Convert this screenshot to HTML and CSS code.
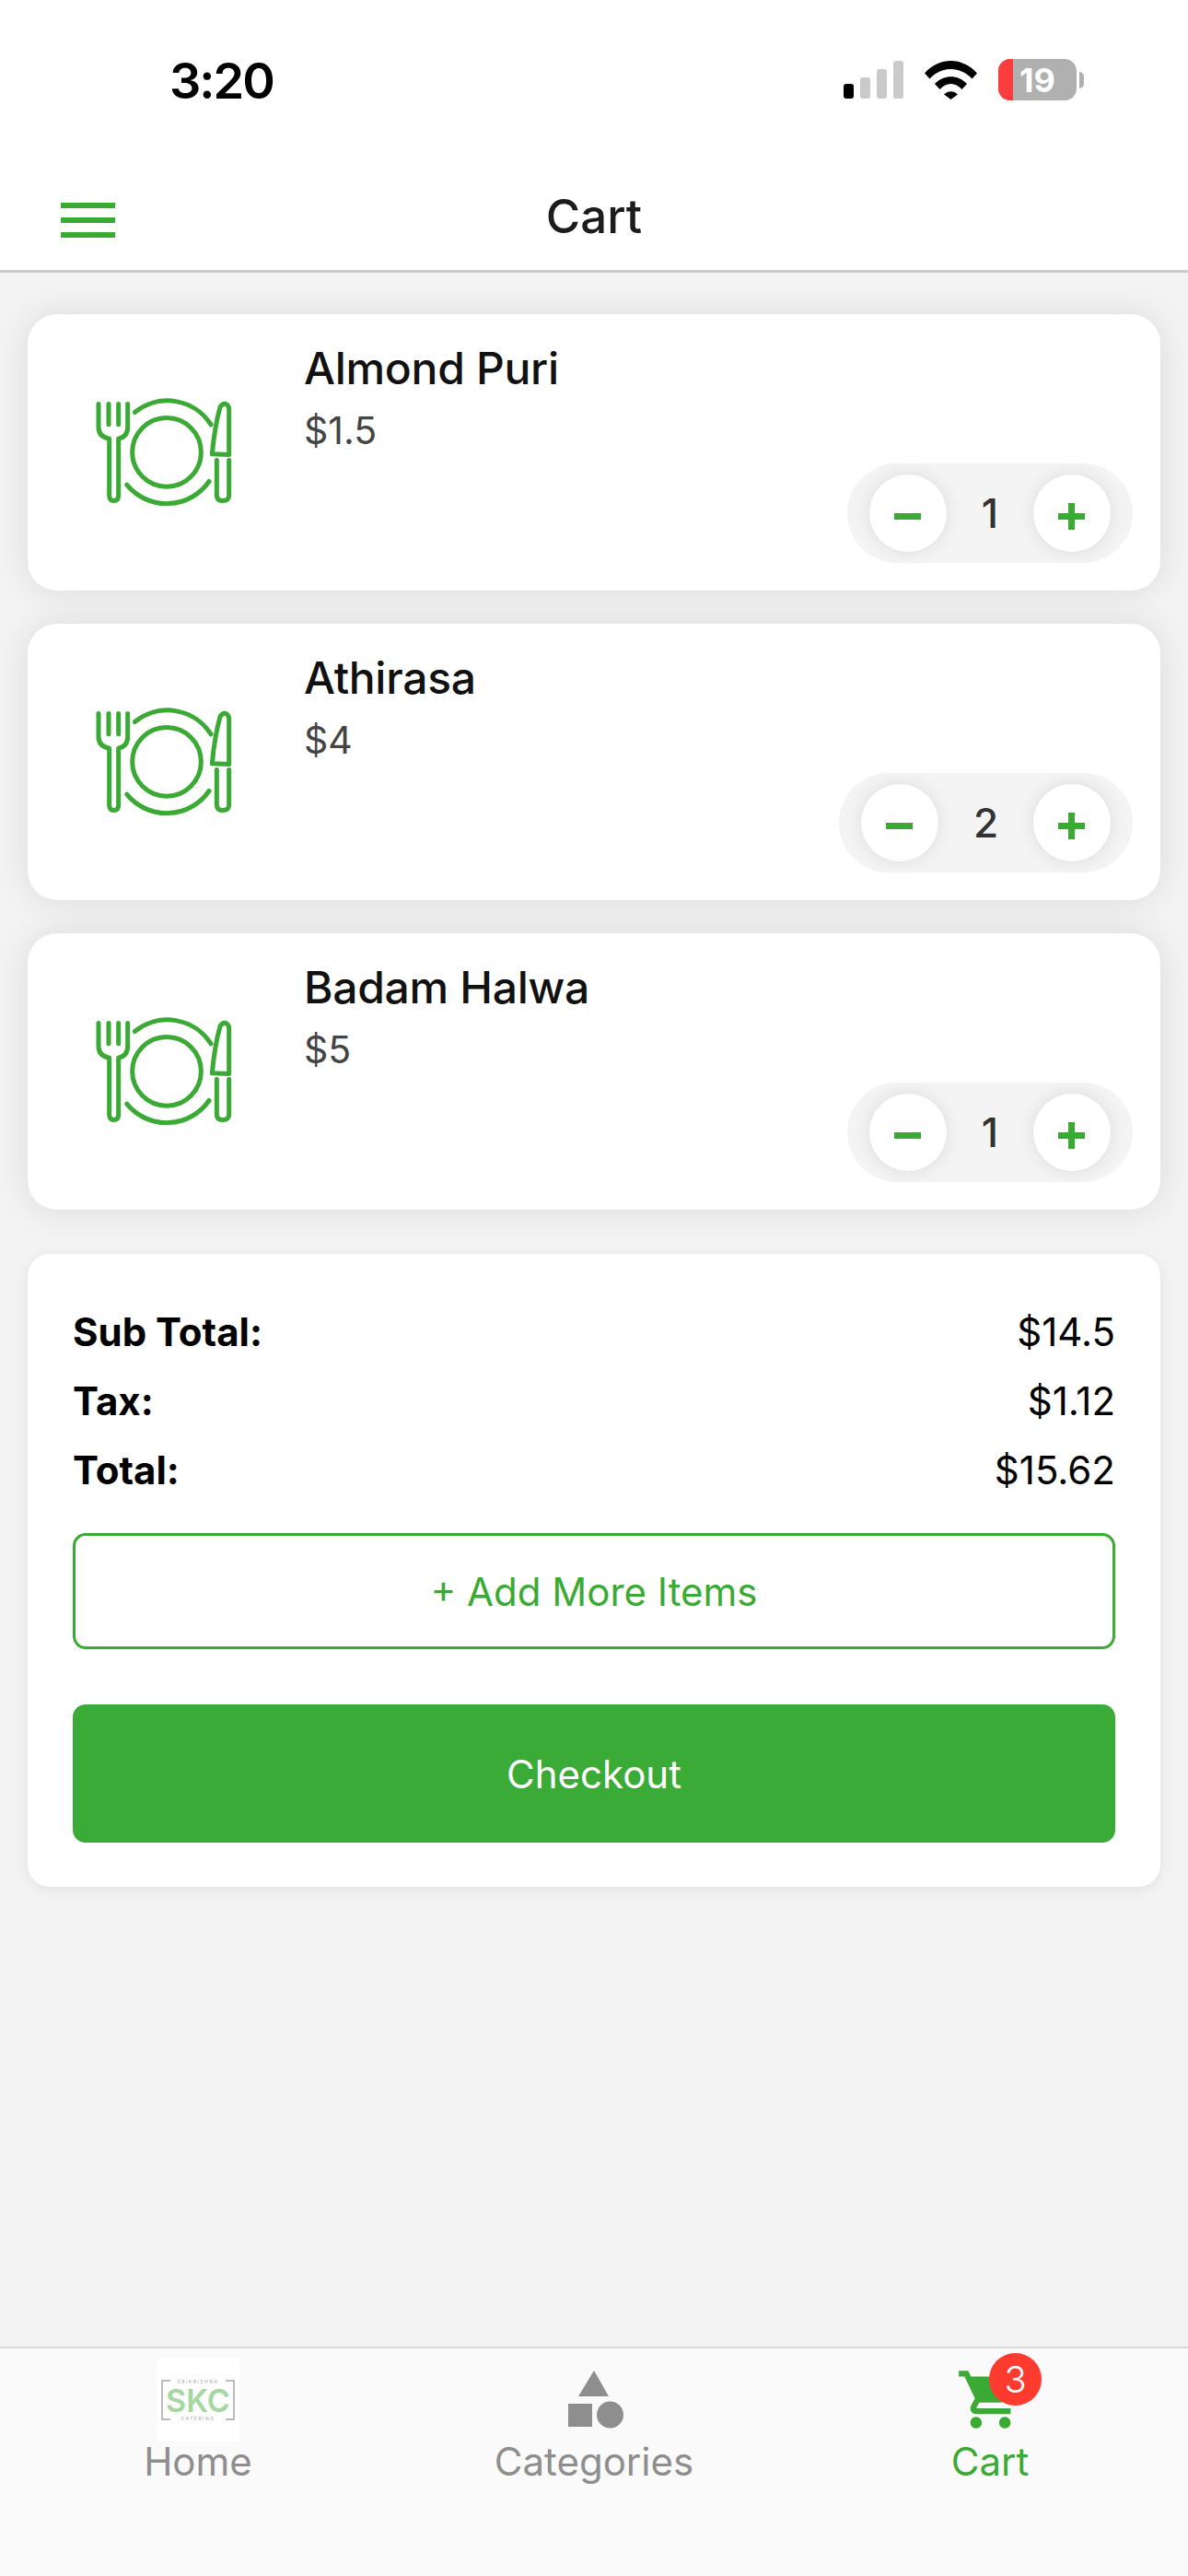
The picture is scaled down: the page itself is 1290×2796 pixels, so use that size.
FILE: index.html

```html
<!DOCTYPE html>
<html lang="en">
<head>
  <meta charset="UTF-8" />
  <meta name="viewport" content="width=device-width, initial-scale=1.0"/>
  <title>Cart</title>
  <link rel="stylesheet" href="styles.css">
</head>
<body>

  <svg class="defs">
    <symbol id="plate" viewBox="250 300 450 365">
      <g fill="none" stroke="#3aaa35" stroke-width="15" stroke-linecap="round" stroke-linejoin="round">
        <path d="M262 325V400Q262 432 297 438V622Q297 640 312 640Q327 640 327 622V438Q357 432 357 400V325"/>
        <path d="M295 325V392M327 325V392"/>
        <circle cx="484" cy="482" r="112"/>
        <path d="M380 352A168 168 0 0 1 628 392"/>
        <path d="M354 588A168 168 0 0 0 622 577"/>
        <path d="M632 488Q640 400 658 335Q668 320 680 327Q687 332 687 342V490Z"/>
        <path d="M647 508V622Q647 640 666 640Q687 640 687 622V508"/>
      </g>
    </symbol>
  </svg>

  <div class="app">
    <div class="status-bar">
      <span class="clock">3:20</span>
      <div class="status-icons">
        <div class="signal">
          <span class="bar bar-on"></span>
          <span class="bar bar-2"></span>
          <span class="bar bar-3"></span>
          <span class="bar bar-4"></span>
        </div>
        <svg class="wifi" viewBox="0 0 57 42">
          <path d="M0 13.5C16 -4.500 41 -4.500 57 13.500L51.500 19.500C38.500 5.500 18.500 5.500 5.500 19.500Z"/>
          <path d="M11 25C20.500 14.500 36.500 14.500 46 25L40.500 31C33.500 23 23.500 23 16.500 31Z"/>
          <path d="M21 36.500C25 32 32 32 36 36.500L28.500 42Z"/>
        </svg>
        <div class="battery">
          <span class="battery-low"></span>
          <span class="battery-level">19</span>
        </div>
        <span class="battery-nub"></span>
      </div>
    </div>

    <div class="header">
      <div class="menu-btn">
        <span></span>
        <span></span>
        <span></span>
      </div>
      <h2>Cart</h2>
    </div>

    <div class="content">
      <div class="card">
        <svg class="item-pic"><use href="#plate"/></svg>
        <div class="item-info">
          <div class="item-name">Almond Puri</div>
          <div class="item-price">$1.5</div>
          <div class="stepper">
            <div class="step-btn"><span class="minus"></span></div>
            <span class="qty">1</span>
            <div class="step-btn"><span class="plus"></span></div>
          </div>
        </div>
      </div>

      <div class="card">
        <svg class="item-pic"><use href="#plate"/></svg>
        <div class="item-info">
          <div class="item-name">Athirasa</div>
          <div class="item-price">$4</div>
          <div class="stepper">
            <div class="step-btn"><span class="minus"></span></div>
            <span class="qty">2</span>
            <div class="step-btn"><span class="plus"></span></div>
          </div>
        </div>
      </div>

      <div class="card">
        <svg class="item-pic"><use href="#plate"/></svg>
        <div class="item-info">
          <div class="item-name">Badam Halwa</div>
          <div class="item-price">$5</div>
          <div class="stepper">
            <div class="step-btn"><span class="minus"></span></div>
            <span class="qty">1</span>
            <div class="step-btn"><span class="plus"></span></div>
          </div>
        </div>
      </div>

      <div class="summary">
        <div class="summary-row"><b>Sub Total:</b><span>$14.5</span></div>
        <div class="summary-row"><b>Tax:</b><span>$1.12</span></div>
        <div class="summary-row"><b>Total:</b><span>$15.62</span></div>
        <button class="btn-outline">+ Add More Items</button>
        <button class="btn-solid">Checkout</button>
      </div>
    </div>

    <div class="tabbar">
      <div class="tab">
        <svg class="tab-icon" viewBox="0 0 90 90">
          <rect width="90" height="90" fill="#fff"/>
          <path d="M15 24H6V66H15M75 24H84V66H75" fill="none" stroke="#a8a8a8" stroke-width="1.500"/>
          <text class="logo-small" x="45" y="27" text-anchor="middle">SRIKRISHNA</text>
          <text class="logo-main" x="45" y="58" text-anchor="middle">SKC</text>
          <text class="logo-small" x="45" y="67" text-anchor="middle">CATERING</text>
        </svg>
        <span>Home</span>
      </div>
      <div class="tab">
        <svg class="tab-icon" viewBox="0 0 90 90" fill="#8e8e8e">
          <path d="M45 13L61 41H28Z"/>
          <rect x="17" y="49" width="26" height="25"/>
          <circle cx="62.500" cy="61" r="14.500"/>
        </svg>
        <span>Categories</span>
      </div>
      <div class="tab tab-active">
        <div class="cart-wrap">
          <svg class="cart-icon" viewBox="0 0 24 24" fill="#3aaa35">
            <path d="M7 18c-1.100 0-1.990.900-1.990 2S5.900 22 7 22s2-.900 2-2-.900-2-2-2zM1 2v2h2l3.600 7.590-1.350 2.450c-.160.290-.250.620-.250.960 0 1.100.900 2 2 2h12v-2H7.420c-.140 0-.250-.110-.250-.250l.030-.120.900-1.630h7.450c.750 0 1.410-.410 1.750-1.030l3.580-6.490c.080-.140.120-.310.120-.480 0-.550-.450-1-1-1H5.210l-.940-2H1zm16 16c-1.100 0-1.990.900-1.990 2s.890 2 1.990 2 2-.900 2-2-.900-2-2-2z"/>
          </svg>
          <span class="badge">3</span>
        </div>
        <span>Cart</span>
      </div>
    </div>
  </div>

</body>
</html>
```

FILE: styles.css

```css
body {
  margin: 0;
  font-family: "Inter", "Liberation Sans", sans-serif;
  background-color: #f3f3f3;
}
.defs {
  display: none;
}
.app {
  height: 100vh;
  display: flex;
  flex-direction: column;
  overflow: hidden;
}

/* Status bar */
.status-bar {
  height: 174px;
  box-sizing: border-box;
  background-color: white;
  padding: 55px 113px 0 184px;
  display: flex;
  justify-content: space-between;
  align-items: flex-start;
}
.clock {
  font-size: 54px;
  font-weight: 600;
  line-height: 66px;
  letter-spacing: -2px;
  color: black;
}
.status-icons {
  display: flex;
  align-items: center;
  margin-top: 9px;
}
.signal {
  display: flex;
  align-items: flex-end;
  gap: 7px;
  height: 41px;
  margin-right: 23px;
}
.bar {
  width: 11px;
  border-radius: 3px;
  background-color: #cacaca;
}
.bar-on {
  height: 16px;
  background-color: black;
}
.bar-2 {
  height: 23px;
}
.bar-3 {
  height: 32px;
}
.bar-4 {
  height: 41px;
}
.wifi {
  width: 57px;
  height: 42px;
  margin-right: 23px;
}
.battery {
  position: relative;
  width: 85px;
  height: 45px;
  border-radius: 13px;
  background-color: #b0b0b0;
  overflow: hidden;
  display: flex;
  align-items: center;
  justify-content: center;
}
.battery-low {
  position: absolute;
  left: 0;
  top: 0;
  bottom: 0;
  width: 16px;
  background-color: #fc3d3f;
}
.battery-level {
  font-size: 36px;
  font-weight: 700;
  color: white;
}
.battery-nub {
  width: 5px;
  height: 18px;
  margin-left: 3px;
  border-radius: 0 5px 5px 0;
  background-color: #b0b0b0;
}

/* Header */
.header {
  position: relative;
  height: 122px;
  box-sizing: border-box;
  background-color: white;
  border-bottom: 3px solid #cbcbcb;
  display: flex;
  align-items: center;
  justify-content: center;
}
.header h2 {
  margin: 2px 0 0;
  font-size: 51px;
  font-weight: 500;
  color: #1c1c1c;
}
.menu-btn {
  position: absolute;
  left: 66px;
  top: 46px;
  width: 59px;
  display: flex;
  flex-direction: column;
  gap: 10px;
}
.menu-btn span {
  height: 6px;
  background-color: #3aaa35;
}

/* Cart list */
.content {
  flex: 1;
  padding: 45px 30px 0;
}
.card {
  height: 300px;
  box-sizing: border-box;
  margin-bottom: 36px;
  padding: 30px;
  display: flex;
  align-items: center;
  background-color: white;
  border-radius: 32px;
  box-shadow: 0 0 36px rgba(0, 0, 0, 0.1);
}
.item-pic {
  width: 150px;
  height: 122px;
  margin-left: 43px;
  margin-right: 77px;
  flex-shrink: 0;
}
.item-info {
  flex: 1;
  align-self: stretch;
  display: flex;
  flex-direction: column;
}
.item-name {
  font-size: 48px;
  font-weight: 500;
  line-height: 58px;
  letter-spacing: -0.3px;
  color: #111;
}
.item-price {
  margin-top: 13px;
  font-size: 41px;
  line-height: 50px;
  color: #444;
}
.stepper {
  margin-top: auto;
  align-self: flex-end;
  height: 108px;
  box-sizing: border-box;
  padding: 12px 24px;
  display: flex;
  align-items: center;
  background-color: #f4f4f4;
  border-radius: 54px;
}
.step-btn {
  position: relative;
  width: 84px;
  height: 84px;
  background-color: white;
  border-radius: 50%;
  box-shadow: 0 0 20px rgba(0, 0, 0, 0.1);
}
.minus, .plus {
  position: absolute;
  left: 27px;
  top: 42px;
  width: 29px;
  height: 7px;
  background-color: #3aaa35;
}
.plus::after {
  content: "";
  position: absolute;
  left: 11px;
  top: -11px;
  width: 7px;
  height: 29px;
  background-color: #3aaa35;
}
.qty {
  margin: 0 38px;
  font-size: 44px;
  font-weight: 500;
  color: #333;
}

/* Totals box */
.summary {
  margin-top: 48px;
  height: 687px;
  box-sizing: border-box;
  padding: 60px 49px 0;
  background-color: white;
  border-radius: 24px;
  box-shadow: 0 3px 14px rgba(0, 0, 0, 0.08);
}
.summary-row {
  display: flex;
  justify-content: space-between;
  height: 75px;
  font-size: 42px;
  line-height: 50px;
  color: black;
}
.summary-row b {
  font-weight: 700;
}
.btn-outline, .btn-solid {
  display: block;
  width: 100%;
  font-family: inherit;
  font-size: 42px;
  border-radius: 14px;
  cursor: pointer;
}
.btn-outline {
  height: 126px;
  margin-top: 18px;
  background-color: white;
  color: #3aaa35;
  border: 3px solid #3aaa35;
}
.btn-solid {
  height: 150px;
  margin-top: 60px;
  background-color: #3aab36;
  color: white;
  border: none;
}

/* Bottom tabs */
.tabbar {
  height: 249px;
  box-sizing: border-box;
  background-color: #fafafa;
  border-top: 2px solid #d8d8d8;
  display: flex;
}
.tab {
  flex: 1;
  padding-top: 11px;
  display: flex;
  flex-direction: column;
  align-items: center;
  font-size: 42px;
  line-height: 50px;
  color: #8e8e8e;
}
.tab-active {
  color: #3aaa35;
}
.tab-icon {
  width: 90px;
  height: 90px;
  margin-bottom: -3px;
}
.logo-small {
  font-size: 5px;
  letter-spacing: 1.500px;
  fill: #a8a8a8;
}
.logo-main {
  font-size: 34px;
  font-weight: 600;
  fill: #a5d8a0;
}
.cart-wrap {
  position: relative;
  width: 90px;
  height: 90px;
  margin-bottom: -3px;
}
.cart-icon {
  position: absolute;
  left: 8px;
  top: 7px;
  width: 75px;
  height: 75px;
}
.badge {
  position: absolute;
  left: 44px;
  top: -6px;
  width: 57px;
  height: 57px;
  border-radius: 50%;
  background-color: #ff3b30;
  color: white;
  font-size: 40px;
  font-weight: 300;
  line-height: 57px;
  text-align: center;
}
```
